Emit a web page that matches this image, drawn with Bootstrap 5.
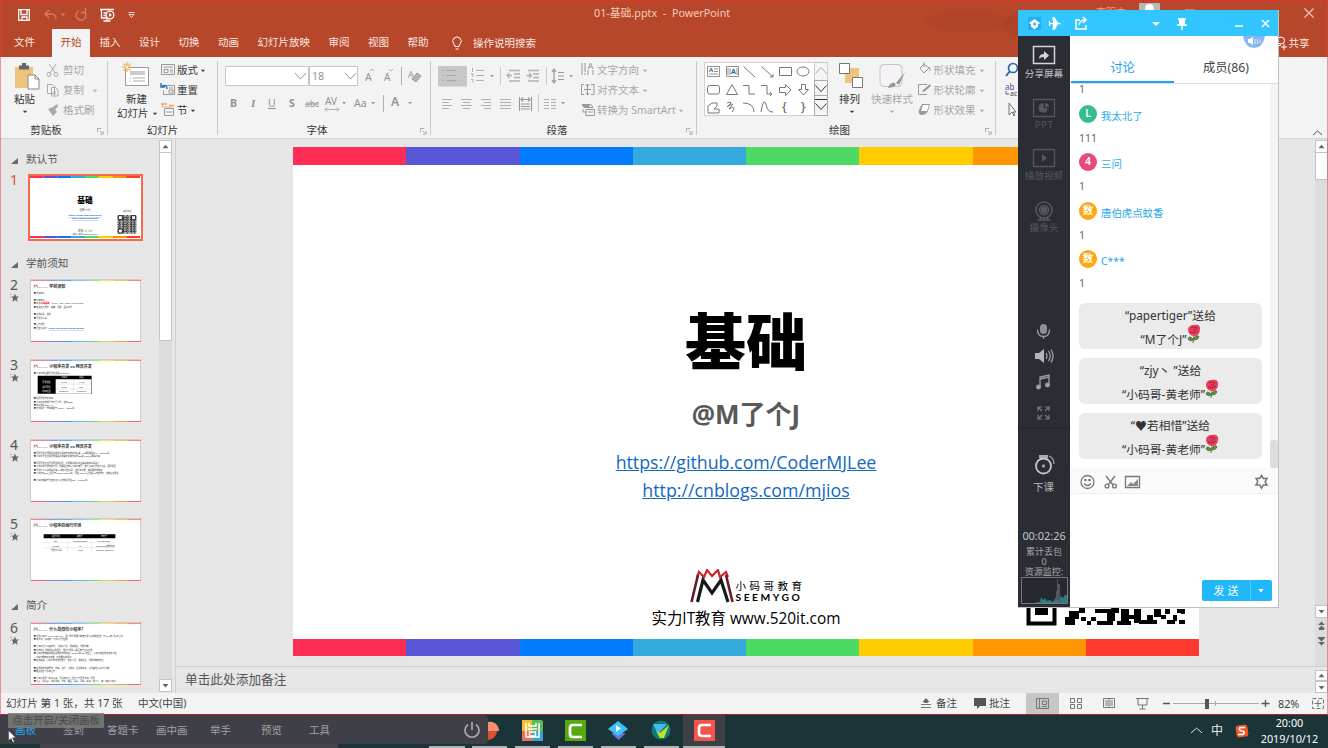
<!DOCTYPE html>
<html lang="zh-CN">
<head>
<meta charset="utf-8">
<title>01-基础.pptx - PowerPoint</title>
<link href="https://cdn.jsdelivr.net/npm/bootstrap@5.3.0/dist/css/bootstrap.min.css" rel="stylesheet">
<script src="https://cdn.jsdelivr.net/npm/bootstrap@5.3.0/dist/js/bootstrap.bundle.min.js"></script>
<style>
html,body{width:1328px;height:748px;overflow:hidden}
body{font-family:"Noto Sans","Noto Sans CJK SC",sans-serif;font-size:10.5px;line-height:14px;color:#333;background:#e6e6e6;white-space:nowrap}
svg{display:block;flex:none;overflow:visible}
.screen{width:1328px;height:748px}
.edge{inset:0 0 33px 0;border:1px solid #e8374280;border-top:1.5px solid #e0352b;border-bottom:1px solid #b02030;pointer-events:none;z-index:5}
.head{height:57px;background:#b7472a;color:#fbe9e2}
.titlerow{height:29px}
.tabsrow{height:28px;padding-left:5px}
.tabsrow .tb{padding:0 9px;width:auto;line-height:27px;height:28px;margin-right:.5px}
.tabsrow .tb.on{background:#f3f3f3;color:#b7472a;padding:0 8.5px}
.ribbon{height:82px;background:#f3f3f3;border-bottom:1px solid #d2d2d2;padding-top:4px}
.grp{height:74px;border-right:1px solid #c9c9c9}
.grp .body{height:62.5px;margin-top:-1px}
.grp .lab{height:14px;line-height:14px;color:#333;text-align:center}
.lab svg{right:3px;top:5px}
.rows>div{height:20px;line-height:20px}
.dim{color:#a6a6a6}
.blk{color:#3a3a3a}
.pane{width:176px;border-right:1px solid #d0d0d0}
.sec{height:20px;line-height:20px;font-size:10.6px;color:#555;padding-left:11px}
.sec svg{margin-right:8px}
.item .no{width:30px;padding-left:10px;font-size:14px;line-height:14px;color:#555;margin-top:-1px}
.item .no svg{margin-top:1px}
.thumb{width:111px;height:63px;background:#fff;border:.5px solid #ccc}
.thumb.sel{width:115px;height:67px;margin-left:-2px;border:2px solid #f26b4a}
.thumb svg{width:110px;height:62px;overflow:hidden;fill:#333}
.vbar{width:13px;background:#dcdcdc}
.vbtn{height:13px;background:#fff;border:1px solid #c4c4c4}
.slide{width:906px;height:509px;margin:8px 0 0 117px;background:#fff}
.stripe{height:17.5px}
.stripe i{flex:1}
.slide h1{font-size:61px;line-height:70px;font-weight:900;color:#000;margin:0}
.slide .by{font-size:26px;line-height:34px;font-weight:700;color:#595959}
.slide a{font-family:"Open Sans","Noto Sans CJK SC",sans-serif;font-size:17.8px;line-height:28px;color:#1268c0}
.notes{height:27px;border-top:1px solid #cfcfcf;font-size:12.7px;line-height:25px;padding-left:9px;color:#555}
.status{height:21px;background:#f3f3f3;color:#444}
.task{height:33px;background:#1a3438}
.bottools{width:488px;height:29px;background:#3f3f47;border-radius:0 4px 4px 0;color:#a2a2a6;line-height:30px}
.tip{left:8px;top:713px;width:96px;height:15px;background:#7b7b79;color:#4b4b4b;line-height:14px;z-index:7;opacity:.85}
.live{left:1018px;top:10px;width:261px;height:598px;z-index:8;background:#fff;border:1px solid #bcc4c8;border-top:0;border-left:0}
.lbar{height:26px;background:#33c5ff}
.side{width:52px;background:#2a2d33;color:#c8c8c8}
.off{color:#56585d}
.ltabs{height:48px;font-size:12.3px;line-height:63px;border-bottom:1px solid #ddd;color:#444;text-align:center}
.ltabs .on{color:#1da1f2;box-shadow:inset 0 -2px #1da1f2}
.av{width:18px;height:18px;border-radius:50%;color:#fff;font-weight:600;text-align:center;line-height:17px;font-size:10.5px}
.nm{color:#28a9e8;margin-left:4px;padding-top:4px;font-size:10.4px}
.msg{color:#666;height:30.5px;line-height:30px;font-size:10.5px}
.gift{width:183px;height:46px;background:#ebebeb;border-radius:6px;color:#333;font-size:11.8px;line-height:24px;text-align:center;margin-bottom:9px}
.gift .ln{height:24px}
.sendb{background:#21b7fb;color:#fff;width:70px;height:21px;border-radius:2px;line-height:21px;font-size:11px;text-align:center}
</style>
</head>
<body>
<svg width="0" height="0" class="position-absolute">
<defs>
<symbol id="dn" viewBox="0 0 6 4"><path d="M.8.7h4.400L3 3z" fill="currentColor"/></symbol>
<symbol id="launch" viewBox="0 0 8 8"><path d="M.5 5V.5H5M3 3l3 3M7 3.5V7H3.5" fill="none" stroke="#999" stroke-width=".9"/></symbol>
<symbol id="tri" viewBox="0 0 8 7"><path d="M8 0v7H0z" fill="#666"/></symbol>
<symbol id="star" viewBox="0 0 10 10"><path d="M5.5.5 6.8 3.8 10 4 7.600 6.200 8.500 9.700 5.500 7.800 2.600 9.700 3.400 6.200 1.200 4 4.300 3.800z" fill="#666"/><path d="M0 1.500h2M0 5h1" stroke="#888" stroke-width=".7"/></symbol>
<symbol id="mlogo" viewBox="0 0 44 34"><path d="M7 8 9 3 14 8 17 1 22 7 28 1 30 8 36 3 38 8" fill="none" stroke="#c9262d" stroke-width="2.200"/><path d="M1.500 33 8 6M42.500 33 36 6" stroke="#6b1c28" stroke-width="2.600"/><path d="M7.500 33 13 11 22 24 31 11 38 33" fill="none" stroke="#191919" stroke-width="3.200"/></symbol>
<symbol id="bars" viewBox="0 0 328 4" preserveAspectRatio="none"><path fill="#ff2d55" d="M0 0h41v4H0z"/><path fill="#5856d6" d="M41 0h41v4H41z"/><path fill="#007aff" d="M82 0h41v4H82z"/><path fill="#34aadc" d="M123 0h41v4h-41z"/><path fill="#4cd964" d="M164 0h41v4h-41z"/><path fill="#fc0" d="M205 0h41v4h-41z"/><path fill="#ff9500" d="M246 0h41v4h-41z"/><path fill="#ff3b30" d="M287 0h41v4h-41z"/></symbol>
<g id="frame"><use href="#bars" width="330" height="4" opacity=".6"/><use href="#bars" y="182" width="330" height="4" opacity=".6"/><use href="#mlogo" x="7" y="12" width="14" height="12"/><text x="21" y="23" font-size="6" fill="#888">SEEMYGO</text></g>
<symbol id="rose" viewBox="0 0 14 20"><path d="M7 11 6 19M6 15Q2 11 1 15q2 3 5 1M7 14q4-4 5-1-1 3-5 3" fill="#66884a" stroke="#4f7a3b"/><path d="M7 1c4-1 7 1 6 5-.500 4-3 6-6 6S1 9 1 6C1 3 3 1 7 1z" fill="#e8405c"/><path d="M4 4q3-2 6 0-1 3-4 2M3 8q4 2 8-1" fill="none" stroke="#ad1c3c"/></symbol>
<symbol id="up13" viewBox="0 0 11 11"><path d="M2.500 7.200h6L5.500 3.800z" fill="#666"/></symbol>
<symbol id="dn13" viewBox="0 0 11 11"><path d="M2.500 4h6L5.500 7.400z" fill="#666"/></symbol>
</defs>
</svg>

<div class="screen d-flex flex-column position-relative">
<div class="edge position-absolute"></div>

<header class="head">
  <div class="titlerow d-flex">
    <svg width="594" height="29" fill="none" stroke="#fff" stroke-width="1.300">
      <path d="M18.700 9.700h10.600v10.600H18.700z"/><path d="M21 10v4.500h6V10M22 20v-3h5v3"/>
      <g stroke="#d57d65"><path d="M49 10l-4 4 4 4M45 14h6q5 0 5 5" /><path d="M60.500 13.500h5l-2.500 2.500z" fill="#d57d65" stroke="none"/><path d="M84.500 11.500A5 5 0 1 1 79 10.500M85.500 8v4.500H81"/></g>
      <path d="M100 9.500h14M101.500 10v8h6M107 18v3M103.500 21h7"/><circle cx="110" cy="15" r="3.800"/><path d="M109 13l3 2-3 2z" fill="#fff" stroke="none"/><path d="M103.500 13h3M103.500 15.500h2"/>
      <path d="M128.500 12.500h6M129 14.500h5l-2.500 3z" stroke-width="1" stroke="#f6d5ca"/>
    </svg>
    <span style="font-size:10.800px;line-height:26px;color:#f7cbbb">01-基础.pptx&nbsp; - &nbsp;PowerPoint</span>
    <svg class="ms-auto" width="300" height="29"><ellipse cx="-60" cy="21" rx="43" ry="11" fill="#a33f26" opacity=".25"/><ellipse cx="5" cy="25" rx="30" ry="14" fill="#963923" opacity=".28"/><path d="M111 3h21v7h-21z" fill="#b8b8b8"/><circle cx="121.500" cy="8.500" r="4.500" fill="#fff"/><text x="68" y="16" font-size="10" fill="#e0a08c">李明杰</text><path d="M157 10h9M276.500 8.500l9 9m0-9-9 9" stroke="#f5c5b7" stroke-width="1.200" fill="none"/></svg>
  </div>
  <nav class="tabsrow d-flex">
    <span class="tb" style="margin-right:8px">文件</span><span class="tb on">开始</span><span class="tb">插入</span><span class="tb">设计</span><span class="tb">切换</span><span class="tb">动画</span><span class="tb">幻灯片放映</span><span class="tb">审阅</span><span class="tb">视图</span><span class="tb">帮助</span>
    <svg width="12" height="15" class="ms-2" style="margin-top:7px;margin-left:13px!important" fill="none" stroke="#fff"><path d="M4 10.500Q4 9 2.500 7.500A4.200 4.200 0 1 1 9.500 7.500Q8 9 8 10.500zM4.500 13h3"/></svg>
    <span style="line-height:28px;margin-left:10px">操作说明搜索</span>
    <span class="ms-auto d-flex" style="line-height:29px;padding-right:18.500px"><svg width="15" height="16" style="margin-top:7px" fill="none" stroke="#fff"><circle cx="7" cy="4.500" r="3.500"/><path d="M2 13Q3 9 7 9M10 8v6M7 11h6"/></svg>共享</span>
  </nav>
</header>

<section class="ribbon d-flex">
  <div class="grp" style="width:108px">
    <div class="body d-flex">
      <div style="width:46px;padding-left:14px"><svg width="26" height="29" style="margin-top:3px"><path d="M1 4h18v21H1z" fill="#ecc47c"/><path d="M5 2.500h10v4H5z" fill="#666"/><path d="M8 0h4v3H8z" fill="#666"/><path d="M14 12h7l4 4v10H14z" fill="#fff" stroke="#888"/><path d="M21 12v4h4" fill="none" stroke="#888"/></svg>粘贴<svg class="ms-2 mt-1" width="6" height="4"><use href="#dn"/></svg></div>
      <div class="rows dim d-flex flex-column">
        <div class="d-flex"><svg width="17" height="20" fill="none" stroke="#aaa"><path d="M3 4l6.500 9M10 4 4 13"/><circle cx="3" cy="14.500" r="2"/><circle cx="10" cy="14.500" r="2"/></svg>剪切</div>
        <div class="d-flex"><svg width="17" height="20" fill="#f3f3f3" stroke="#aaa"><path d="M1.500 4.500h5l2 2v7h-7zM5.500 7.500h4l2.500 2.500v6H5.500zM7 12h3M7 14h3"/></svg>复制<svg width="6" height="4" style="margin:9px 0 0 8px"><use href="#dn"/></svg></div>
        <div class="d-flex"><svg width="17" height="20"><path d="M2 9l5-2 4 5-4 4zM7 7l4-3 1 2-3 4z" fill="#aaa"/></svg>格式刷</div>
      </div>
    </div>
    <div class="lab position-relative" style="padding-right:15px">剪贴板<svg class="position-absolute" width="7" height="7"><use href="#launch"/></svg></div>
  </div>
  <div class="grp" style="width:110px">
    <div class="body d-flex">
      <div style="width:52px;padding-left:9px"><div style="padding-left:5px"><svg width="28" height="29" style="margin-top:3px"><path d="M3.500 4.500h23v18h-23z" fill="#fff" stroke="#999"/><path d="M8 15h1M11 15h12M8 18h1M11 18h12" stroke="#aaa"/><path d="M8 8h15v4H8z" fill="#ccc"/><g stroke="#eeb355" stroke-width="1.200"><path d="M5-1v3M5 6v3M0 4h3M7 4h3M1.500.5l2 2M6.500 5.500l2 2M8.500.5l-2 2M3.500 5.500l-2 2"/></g><circle cx="5" cy="4" r="2" fill="#fff4d5" stroke="#eeb355" stroke-width=".8"/></svg></div><span style="margin-left:9px">新建</span><div class="d-flex">幻灯片<svg width="6" height="4" style="margin:6px 0 0 3px"><use href="#dn"/></svg></div></div>
      <div class="rows blk d-flex flex-column">
        <div class="d-flex"><svg width="17" height="20" fill="none" stroke="#999"><path d="M1.500 4.500h13v10h-13zM3.500 7h9M4 9.500h4v3H4zM10 10h3M10 12h3"/></svg>版式<svg width="6" height="4" style="margin:9px 0 0 2px"><use href="#dn"/></svg></div>
        <div class="d-flex"><svg width="17" height="20" fill="none" stroke="#999"><path d="M5.500 5.500h9v9h-11v-4M9 8h4M9 10h4v3H9z"/><path d="M7 9Q7 4 2 6M1 3v4h4" stroke="#2b6cb5" stroke-width="1.400"/></svg>重置</div>
        <div class="d-flex"><svg width="17" height="20" fill="none" stroke="#999"><path d="M4.500 8.500h9v7h-9zM6 12h6"/><path d="M1 4h6M9 5.500h5" stroke="#eca66a" stroke-width="1.500"/><path d="M2.500 4v3h10" stroke="#eca66a"/></svg>节<svg width="6" height="4" style="margin:9px 0 0 2px"><use href="#dn"/></svg></div>
      </div>
    </div>
    <div class="lab">幻灯片</div>
  </div>
  <div class="grp" style="width:213px">
    <svg class="body" width="212" height="60" fill="none" stroke="#9a9a9a" font-size="10.500">
      <path d="M7.500 6.500h83v19h-83zM91.500 6.500h48v19h-48z" fill="#fff" stroke="#c6c6c6"/><path d="M77 13l5.500 6 5.500-6M127 13l5.500 6 5.500-6" stroke="#888" stroke-width=".9"/>
      <g fill="#929292" stroke="none"><text x="94" y="20">18</text><text x="147" y="21">A</text><text x="166" y="21" font-size="10">A</text><text x="190" y="18" font-size="9">A</text><text x="12" y="47" font-weight="700">B</text><text x="33" y="47" font-style="italic" font-weight="700" font-size="11" font-family="Liberation Serif">I</text><text x="50" y="47" text-decoration="underline">U</text><text x="71" y="47" font-weight="700">S</text><text x="87" y="47" font-size="8.500" text-decoration="line-through">abc</text><text x="107" y="45" font-size="10">AV</text><text x="136" y="47">Aa</text><text x="173" y="46" font-weight="600" font-size="12">A</text><path d="M124 42h4.200l-2.100 2.300zM153 42h4.200l-2.100 2.300zM190 42h4.200l-2.100 2.300z" fill="#999"/></g>
      <path d="M152 11l2-2 2 2M171 9l2 2 2-2M183.500 7v18M165.500 35v17M107 49.500h14M109 47.500l-2 2 2 2M119 47.500l2 2-2 2" stroke="#b0b0b0"/><path d="M194 19l5-6 4 3-5 6z" fill="#b5b5b5"/>
    </svg>
    <div class="lab position-relative" style="padding-right:14px">字体<svg class="position-absolute" width="7" height="7"><use href="#launch"/></svg></div>
  </div>
  <div class="grp" style="width:266px">
    <div class="body d-flex">
    <svg width="149" height="60" fill="none" stroke="#b0b0b0">
      <path d="M7 6h29v20.500H7z" fill="#c7c7c7" stroke="none"/><path d="M11 10.500h1.500M15 10.500h10M11 15.500h1.500M15 15.500h10M11 20.500h1.500M15 20.500h10" stroke="#aaa"/>
      <path d="M45 10.500h8M45 15.500h8M45 20.500h8M41.500 8v4M40 14h2v3M40 19.500h2v3"/>
      <path d="M69.500 7v18M115.500 7v18M107.500 34v18" stroke="#ccc"/>
      <path d="M78 10.500h11M83 14h6M83 17.500h6M78 21h11M81 15.500h-5m2.500-2.500L76 15.500 78.500 18M97 10.500h11M102 14h6M102 17.500h6M97 21h11M95.500 15.500h5m-2.500-2.500 2.500 2.500L98 18" stroke-width="1.300"/>
      <path d="M123 10v12M121 12l2-3 2 3M121 20l2 3 2-3M127 12.500h6M127 16h6M127 19.500h6" stroke="#999" stroke-width="1.200"/>
      <path d="M11 39.500h10M11 42.500h7M11 45.500h10M11 48.500h7M30 39.500h11M32 42.500h7M30 45.500h11M32 48.500h7M50 39.500h10M53 42.500h7M50 45.500h10M53 48.500h7M69 39.500h11M69 42.500h11M69 45.500h11M69 48.500h11"/>
      <path d="M88.500 37v14M100.500 37v14M90 39.500h9M92 37.500l-2 2 2 2M97 37.500l2 2-2 2M90 44h9M90 46.500h9M90 49h9" stroke="#999" stroke-width="1.100"/>
      <path d="M113 39.500h5M113 42.500h5M113 45.500h5M113 48.500h5M120 39.500h5M120 42.500h5M120 45.500h5M120 48.500h5"/>
      <path d="M59 15h4.200l-2.100 2.300zM138 15h4.200l-2.100 2.300zM130 42h4.200l-2.100 2.300z" fill="#999" stroke="none"/>
    </svg>
    <div class="rows dim">
      <div class="d-flex"><svg width="17" height="20" fill="none" stroke="#999"><path d="M2 3v12M5 3v9M8 10v5M13 10v5M5 13v2"/><path d="M8 9l2.500-6L13 9M9 7h3"/></svg>文字方向<svg width="6" height="4" style="margin:9px 0 0 3px"><use href="#dn"/></svg></div>
      <div class="d-flex"><svg width="17" height="20" fill="none" stroke="#999"><path d="M4 4.500H1.500v10H4M11 4.500h3v10h-3M7.500 4v11M5.500 6l2-2 2 2M5.500 13l2 2 2-2M4 9.500h7"/></svg>对齐文本<svg width="6" height="4" style="margin:9px 0 0 3px"><use href="#dn"/></svg></div>
      <div class="d-flex"><svg width="17" height="20" fill="none" stroke="#999"><path d="M2 4.500h9l2 3H4zM6 9.500h8.500v6H6z"/><path d="M2 5h7v2H4z" fill="#999"/><path d="M3 9v3h3M8 12h5"/></svg><span>转换为 SmartArt</span><svg width="6" height="4" style="margin:9px 0 0 2px"><use href="#dn"/></svg></div>
    </div>
    </div>
    <div class="lab position-relative" style="padding-right:13px">段落<svg class="position-absolute" width="7" height="7"><use href="#launch"/></svg></div>
  </div>
  <div class="grp" style="width:299px">
    <div class="body d-flex">
      <svg width="132" height="60" fill="none" stroke="#777">
        <path d="M7.500 2.500h123v53h-123z" fill="#fff" stroke="#d5cccc"/><path d="M117.500 2.500h13v53h-13z" fill="#f5f5f5" stroke="#ccc"/><path d="M117.500 20.500h13v15h-13zM117.500 35.500h13v20h-13z" stroke="#aaa"/>
        <path d="M118.500 13.500l5.500-6 5.500 6" stroke="#aaa"/><path d="M118.500 25.500l5.500 6 5.500-6M118.500 43.500l5.500 6 5.500-6" stroke="#333"/><path d="M118 39.500h12" stroke="#333"/>
        <path d="M10.500 6.500h12v10h-12zM29.500 6.500h12v10h-12zM17 9h4M17 11.500h4M12 14h9M31 8v7M33 8v7M40 8v7" stroke-width=".8"/><text x="12" y="12" font-size="6" font-weight="700" fill="#369" stroke="none">A</text><text x="34" y="14" font-size="7" font-weight="700" fill="#369" stroke="none">A</text>
        <path d="M46.500 6.500 58 17M64.500 6.500 76 17m0-3v3h-3M82.500 7.500h12v8h-12z"/><ellipse cx="106" cy="11.500" rx="6" ry="4.500"/>
        <rect x="10.500" y="25.500" width="12" height="8.500" rx="2"/><path d="M35 24.500 29.500 34.500h11zM46 25.500h6v8.500h6M64 25.500h6v8.500h5m-2-2 2 2-2 2M82.500 27.500h6v-3l5.500 5.500-5.500 5.500v-3h-6zM104.500 24.500h4v5h3L106.500 35l-5-5.500h3z"/>
        <path d="M11 46l4-3h5v3l-3 3h5v4H11zM30 43q4-2 4 0l-4 4q7-5 5-2l-3 4q5-3 5 0l-2 3M46 43q11 0 11 9M64 52q3-18 6-4 2 5 6 4"/><g fill="#555" stroke="none" font-size="12"><text x="85" y="51">{</text><text x="104" y="51">}</text></g>
      </svg>
      <div style="width:36px;padding-left:10px"><svg width="26" height="29" style="margin-top:3px"><path d="M6 5h14v15H6z" fill="#ecc47c"/><path d="M.5.5h10v10h-10zM13.500 14.500h10v10h-10z" fill="#fff" stroke="#777"/></svg>排列<svg width="6" height="4" class="mt-1" style="margin-left:10px"><use href="#dn"/></svg></div>
      <div class="dim" style="width:53px;padding-left:6px"><svg width="40" height="29" style="margin-top:3px"><rect x="9" y="1.500" width="22" height="22" rx="4" fill="#f7f2f7" stroke="#c9bfcb"/><path d="M34 9 25 20l3 2z" fill="#999"/><path d="M17 25q2-6 7-5 3 4-7 5z" fill="#999"/></svg>快速样式<svg width="6" height="4" class="mt-1" style="margin-left:18px"><use href="#dn"/></svg></div>
      <div class="rows dim">
        <div class="d-flex"><svg width="15.500" height="20" fill="none" stroke="#999"><path d="M2 8l4-4 5 4-5 5zM11 7q3 3 0 4M6 2v5"/></svg>形状填充<svg width="6" height="4" style="margin:9px 0 0 3px"><use href="#dn"/></svg></div>
        <div class="d-flex"><svg width="15.500" height="20" fill="none" stroke="#999"><path d="M9 4.500H.5v10H9" /><path d="M4 11l8-7 1 2-7 6z" fill="#999" stroke="none"/></svg>形状轮廓<svg width="6" height="4" style="margin:9px 0 0 3px"><use href="#dn"/></svg></div>
        <div class="d-flex"><svg width="15.500" height="20"><path d="M1 10l3-6h8l-2 7q-2 4-7 4-3-1-2-5z" fill="#999"/><path d="M5 5h6l-2 6H3z" fill="#fff"/></svg>形状效果<svg width="6" height="4" style="margin:9px 0 0 3px"><use href="#dn"/></svg></div>
      </div>
    </div>
    <div class="lab position-relative" style="padding-right:13px">绘图<svg class="position-absolute" width="7" height="7"><use href="#launch"/></svg></div>
  </div>
  <svg width="332" height="76" fill="none"><circle cx="17" cy="7" r="4.500" stroke="#2f68a8" stroke-width="1.700"/><path d="M14 10l-4 5" stroke="#2f68a8" stroke-width="2"/><text x="9" y="29" font-size="8" fill="#6b4c9a">ab</text><text x="14" y="35" font-size="7" fill="#444">ac</text><path d="M10 30v3h3" stroke="#2f68a8"/><path d="M13 42v12l3-3 2 4 1-1-2-3h3z" stroke="#777"/><path d="M317 74l4.500-4 4.500 4" stroke="#555"/></svg>
</section>

<main class="d-flex" style="height:554px">
  <aside class="pane d-flex">
    <div class="flex-grow-1 overflow-hidden">
      <div class="sec d-flex align-items-center" style="margin-top:9.500px"><svg width="7" height="6" class="mt-1"><use href="#tri"/></svg>默认节</div>
      <div class="item d-flex" style="margin-top:5.500px;height:79px"><div class="no" style="color:#d8503a">1</div><div class="thumb sel"><svg viewBox="0 0 330 186"><use href="#bars" width="330" height="6"/><use href="#bars" y="180" width="330" height="6"/><g text-anchor="middle"><text x="165" y="82" font-size="23" font-weight="900" fill="#000">基础</text><text x="165" y="105" font-size="8">@M了个J</text><g fill="#0563c1" font-weight="700" text-decoration="underline"><text x="165" y="120" font-size="6.300">https://github.com/CoderMJLee</text><text x="165" y="129" font-size="6.300">http://cnblogs.com/mjios</text></g><text x="165" y="177" font-size="6">实力IT教育 www.520it.com</text><text x="291" y="108" font-size="6.500">扫码关注</text></g><use href="#mlogo" x="144" y="157" width="15" height="13"/><text x="160" y="169" font-size="5.500" fill="#777">小码哥教育</text><path d="M263 117h56v56h-56z" fill="#aaa"/><path d="M263 124h56M263 131h56M263 138h56M263 145h56M263 152h56M263 159h56M263 166h56" stroke="#333" stroke-width="3.500" stroke-dasharray="5 3 2 4 7 2"/><path d="M269 117v56M280 117v56M292 117v56M304 117v56M314 117v56" stroke="#333" stroke-width="3" stroke-dasharray="4 3 6 2"/><g fill="#fff" stroke="#222" stroke-width="3"><path d="M265 119h12v12h-12zM305 119h12v12h-12zM265 159h12v12h-12z"/></g></svg></div></div>
      <div class="sec d-flex align-items-center"><svg width="7" height="6" class="mt-1"><use href="#tri"/></svg>学前须知</div>
      <div class="item d-flex" style="margin-top:6px;height:80px"><div class="no">2<svg width="9" height="9"><use href="#star"/></svg></div><div class="thumb"><svg viewBox="0 0 330 186" font-size="6.300"><use href="#frame"/><text x="55" y="23" font-size="12" font-weight="700">学前须知</text><text x="8" y="42">■ 课程简介</text><text x="8" y="62">■ 必备知识</text><text x="8" y="73">■ 熟悉 <tspan fill="#f02" font-weight="700">前端基础</tspan>（HTML、CSS）https://github.com</text><text x="8" y="83">■ 包括但不限于：变量、函数、面向对象</text><text x="8" y="105">■ 使用工具、插件</text><text x="8" y="116">■ 开发者工具</text><text x="8" y="136">■ 官方文档</text><text x="8" y="147">■ 微信小程序：<tspan fill="#0563c1" font-weight="700" text-decoration="underline">https://developers.weixin.qq.com</tspan></text></svg></div></div>
      <div class="item d-flex" style="height:79.500px"><div class="no">3<svg width="9" height="9"><use href="#star"/></svg></div><div class="thumb"><svg viewBox="0 0 330 186" font-size="6.300"><use href="#frame"/><text x="55" y="23" font-size="12" font-weight="700">小程序开发 vs 网页开发</text><text x="8" y="41">■ 小程序的主要开发语言是JavaScript</text><path d="M20 47h162v54H20z" fill="#000"/><path d="M74 58h107v43H74z" fill="#fff"/><path d="M74 72h107M74 87h107M127 58v43" stroke="#bbb"/><g fill="#fff"><text x="34" y="69">开发语言</text><text x="34" y="83">运行环境</text><text x="34" y="97">线程模型</text><text x="90" y="55">小程序</text><text x="145" y="55">网页</text></g><g><text x="90" y="69">WXML</text><text x="144" y="69">HTML</text><text x="90" y="83">WXSS</text><text x="145" y="83">CSS</text><text x="83" y="97">JavaScript</text><text x="137" y="97">JavaScript</text></g><text x="8" y="117">■ 网页开发渲染线程</text><text x="8" y="128">■ 小程序中逻辑层渲染层分开，没有DOM</text><text x="8" y="138">■ 缺少相关DOM API</text><text x="8" y="148">■ 无法运行一些前端框架 jQuery、Zepto等</text></svg></div></div>
      <div class="item d-flex" style="height:79.500px"><div class="no">4<svg width="9" height="9"><use href="#star"/></svg></div><div class="thumb"><svg viewBox="0 0 330 186" font-size="6.300"><use href="#frame"/><text x="55" y="23" font-size="12" font-weight="700">小程序开发 vs 网页开发</text><text x="8" y="41">■ 网页开发者需要面对的环境是各式各样的浏览器，PC端需要面对IE、Chrome等</text><text x="8" y="51">■ 小程序开发过程中需要面对的是两大操作系统iOS和Android的客户端</text><text x="8" y="72">■ 网页开发者在开发网页的时候，只需要使用到浏览器和编辑工具即可</text><text x="8" y="82">■ 小程序的开发有所不同，需要经过申请小程序帐号、安装小程序开发者工具、配置项目</text><text x="8" y="92">■ 开发者可以使用客户端API调起微信扫码、支付等功能，实现更丰富体验</text><text x="8" y="102">■ 小程序在iOS上运行于JavaScriptCore中，而在Android上则由X5内核渲染，性能接近原生</text><text x="8" y="124">■ 小程序借助于微信平台可以轻松运行在iOS、Android等</text></svg></div></div>
      <div class="item d-flex" style="height:76.500px"><div class="no">5<svg width="9" height="9"><use href="#star"/></svg></div><div class="thumb"><svg viewBox="0 0 330 186" font-size="6.300"><use href="#frame"/><text x="55" y="23" font-size="12" font-weight="700">小程序的运行环境</text><path d="M38 46h215v12H38z" fill="#000"/><g fill="#fff"><text x="62" y="54">运行环境</text><text x="137" y="54">逻辑层</text><text x="210" y="54">渲染层</text></g><path d="M38 71h215M38 86h215M110 58v42M181 58v42" stroke="#ccc"/><text x="69" y="68">iOS</text><text x="127" y="68">JavaScriptCore</text><text x="200" y="68">WKWebView</text><text x="62" y="83">Android</text><text x="143" y="83">V8</text><text x="195" y="83">chromium定制内核</text><text x="60" y="97">开发者工具</text><text x="140" y="97">NWJS</text><text x="195" y="97">Chrome WebView</text></svg></div></div>
      <div class="sec d-flex align-items-center"><svg width="7" height="6" class="mt-1"><use href="#tri"/></svg>简介</div>
      <div class="item d-flex" style="margin-top:7px;height:70px"><div class="no">6<svg width="9" height="9"><use href="#star"/></svg></div><div class="thumb"><svg viewBox="0 0 330 186" font-size="6.300"><use href="#frame"/><text x="55" y="23" font-size="12" font-weight="700">什么是微信小程序？</text><text x="8" y="41">■ 微信小程序（Mini Program），是一种不需要下载安装即可使用的应用，于2017年1月9日上线</text><text x="8" y="51">■ 用户扫一扫或搜一下即可打开应用</text><text x="8" y="72">■ 小程序也可以被称为，可触手可及、用完即走、无需卸载</text><text x="8" y="83">■ 也体现了“用完即走”的理念，用户不用关心是否安装太多应用</text><text x="8" y="93">■ 小程序能够实现原生应用的流畅体验 Android 和 iOS 平台上，小程序的应用将无处不在</text><text x="8" y="105">✓ 小程序能够快速传播，提供更好的服务</text><text x="8" y="115">■ 总体来讲，小程序有着无需安装、触手可及、用完即走、无需卸载的特点</text><text x="8" y="137">■ 应用场景包括餐饮、电商、出行、小游戏、生活服务等，以及其他众多线下场景</text><text x="8" y="147">■ 更多信息可参考官方</text><text x="8" y="168">■ 小程序发展一年多以来，已经有超过一百五十万开发者加入开发</text><text x="8" y="178">■ 代表：拼多多、摩拜单车、京东、美团、滴滴、同程、携程、饿了么、跳一跳等小程序</text></svg></div></div>
    </div>
    <div class="vbar d-flex flex-column" style="margin:1px 3px 1px 0"><div class="vbtn"><svg width="11" height="11"><use href="#up13"/></svg></div><div class="vbtn" style="height:188px;border-top:0"></div><div class="vbtn mt-auto"><svg width="11" height="11"><use href="#dn13"/></svg></div></div>
  </aside>
  <section class="flex-grow-1 d-flex flex-column">
    <div class="d-flex" style="height:527px">
      <div class="slide d-flex flex-column">
        <div class="stripe d-flex"><i style="background:#ff2d55"></i><i style="background:#5856d6"></i><i style="background:#007aff"></i><i style="background:#34aadc"></i><i style="background:#4cd964"></i><i style="background:#fc0"></i><i style="background:#ff9500"></i><i style="background:#ff3b30"></i></div>
        <div class="flex-grow-1 position-relative text-center d-flex flex-column align-items-center" style="padding-top:142px">
          <h1>基础</h1>
          <div class="by" style="margin-top:20px">@M了个J</div>
          <a href="#" style="margin-top:17px">https://github.com/CoderMJLee</a>
          <a href="#">http://cnblogs.com/mjios</a>
          <div class="d-flex" style="margin-top:65px;width:113px;height:36px"><svg width="44" height="34"><use href="#mlogo"/></svg><div class="text-start text-black" style="padding:12px 0 0 2px;line-height:11.500px;font-size:10.500px;letter-spacing:3.500px">小码哥教育<div style="font-size:10.300px;font-weight:700;font-family:Lato;letter-spacing:2.500px">SEEMYGO</div></div></div>
          <div class="text-black" style="font-size:15.400px;line-height:24px;margin-top:2px;font-family:'Open Sans','Noto Sans CJK SC',sans-serif">实力IT教育 www.520it.com</div>
          <svg class="position-absolute" style="left:734px;top:432px" width="158" height="30"><path d="M1.500-1v27.500h26V-1M10-1h9v17h-9z" fill="none" stroke="#000" stroke-width="4"/><path d="M10 0h10v16H10z"/><path d="M38 20h10v8H38zM42 14h10v8H42zM52 11h6v5h-6zM54 20h5v4h-5zM60 24h4v4h-4zM64 20h5v4h-5zM68 12h16v4H68zM70 24h16v4H70zM80 16h8v8h-8zM84 11h8v5h-8zM90 24h14v4H90zM94 12h8v12h-8zM102 18h6v4h-6zM107 12h7v14h-7zM112 23h18v4h-18zM120 18h6v5h-6zM127 12h7v8h-7zM134 18h5v4h-5zM140 23h8v4h-8zM138 12h5v5h-5zM146 18h4v6h-4zM150 12h4v4h-4zM154 12h4v5h-4zM152 23h6v4h-6z"/></svg>
        </div>
        <div class="stripe d-flex"><i style="background:#ff2d55"></i><i style="background:#5856d6"></i><i style="background:#007aff"></i><i style="background:#34aadc"></i><i style="background:#4cd964"></i><i style="background:#fc0"></i><i style="background:#ff9500"></i><i style="background:#ff3b30"></i></div>
      </div>
      <div class="vbar ms-auto d-flex flex-column" style="margin-top:1px"><div class="vbtn"><svg width="11" height="11"><use href="#up13"/></svg></div><div class="vbtn" style="height:27px;border-top:0"></div><div class="vbtn" style="margin-top:425px"><svg width="11" height="11"><use href="#dn13"/></svg></div><svg width="13" height="36" fill="#666"><path d="M3 7h7L6.500 3.500zM3 11h7L6.500 7.500zM4 11h5v1H4zM3 19h7v1H3zM3 20h7L6.500 23.500zM3 24h7L6.500 27.500z"/></svg></div>
    </div>
    <div class="notes d-flex">单击此处添加备注<div class="ms-auto" style="width:13px;padding-top:3px"><div class="vbtn" style="height:11px"><svg width="11" height="9" viewBox="0 1 11 9"><use href="#up13" width="11" height="11"/></svg></div><div class="vbtn" style="height:12px"><svg width="11" height="10"><use href="#dn13" width="11" height="11"/></svg></div></div></div>
  </section>
</main>

<footer class="status d-flex" style="line-height:21px">
  <span style="padding-left:6px;width:138px;font-size:10.600px">幻灯片 第 1 张，共 17 张</span><span>中文(中国)</span>
  <span class="ms-auto d-flex"><svg width="15" height="21"><path d="M5 5l3.500 4h-7z" fill="#666"/><path d="M0 11.500h10M0 14.500h10M3 9.500h4" stroke="#777"/></svg>备注</span>
  <span class="d-flex" style="margin-left:17px"><svg width="15" height="21"><path d="M0 5h12v8H6l-3 3v-3H0z" fill="#555"/></svg>批注</span>
  <svg width="318" height="21" fill="none" stroke="#777"><path d="M16 0h33v21H16z" fill="#c6c6c6" stroke="none"/><path d="M26.500 5.500h12v10h-12zM29.500 5.500v10M32.500 8h4v3.500h-4zM32 13.500h5M60.500 5.500h4v4h-4zM67.500 5.500h4v4h-4zM60.500 11.500h4v4h-4zM67.500 11.500h4v4h-4zM99 6v9M93.500 5.500h11v9h-11zM95 8h3M95 10h3M95 12h3M100 8h3M100 10h3M100 12h3M126 5.500h13M128 6v6h9V6M132.500 12v4M129.500 16h6"/><path d="M153 10.500h7M251.500 10.500h8M255.500 7v7" stroke="#555" stroke-width="1.300"/><path d="M163 10.500h86M205.500 8v5" stroke="#aaa"/><path d="M195 6h4v10h-4z" fill="#555" stroke="none"/><text x="268" y="14.500" font-size="10.800" fill="#444" stroke="none">82%</text><path d="M302.500 5.500h11v10h-11z" stroke-dasharray="4 2"/><path d="M308 7v7M304.500 10.500h7"/></svg>
</footer>

<footer class="task d-flex position-relative" style="margin-top:1px">
  <div style="width:488px"><div class="bottools d-flex position-relative"><span style="width:48px;margin-left:15px;color:#22a8ed">画板</span><span style="width:44px">签到</span><span style="width:49px">答题卡</span><span style="width:54px">画中画</span><span style="width:51px">举手</span><span style="width:48px">预览</span><span>工具</span><svg class="ms-auto" style="margin:6px 7px 0 0" width="18" height="18" fill="none" stroke="#a8a8ad" stroke-width="1.700"><path d="M5 3.500a7 7 0 1 0 8 0M9 1v8"/></svg></div><div style="height:4px;width:298px;margin-left:40px;background:#454347"></div></div>
  <svg width="340" height="33">
    <path d="M0 7a9 9 0 0 1 0 18z" fill="#d95232"/><path d="M0 7a9 9 0 0 1 11 9H0z" fill="#f58f6e"/>
    <g transform="translate(34 5)"><rect width="21" height="21" rx="2" fill="#58bb58"/><path d="M0 0h10v11H0z" fill="#f4c034"/><path d="M0 11h10v10H0z" fill="#ea705d"/><path d="M11 11h10v10H11z" fill="#3f9fd8"/><path d="M4 3v14h13V3M7 3v3h7V3M6 9h9M7.500 12h6v4h-6z" fill="none" stroke="#fff" stroke-width="1.500"/></g>
    <g transform="translate(77 5)"><rect width="21" height="21" fill="#58a910"/><path d="M17 5H8Q5 5 5 8v6q0 3 3 3h9" fill="none" stroke="#fff" stroke-width="2.700"/></g>
    <g transform="translate(120 5)"><path d="M4 13h13v1l-6.500 6L4 14z" fill="#6d72dd"/><path d="M0 9 10 1l10 8-10 7z" fill="#3ac4fa"/><path d="M8 5v7l5-3.500z" fill="#fff"/></g>
    <g transform="translate(163 5)"><circle cx="10" cy="10" r="9.500" fill="#137a72"/><path d="M2 4h14L7 14z" fill="#4cb9ee"/><path d="M5 11l4 2 9-8-5 13H9z" fill="#b9e625"/></g>
    <path d="M195 0h42v33h-42z" fill="#3a4043"/><rect x="206" y="5" width="21" height="21" fill="#f5544b"/><path d="M223 10h-9q-3 0-3 3v5q0 3 3 3h9" fill="none" stroke="#fff" stroke-width="2.700"/>
    <path d="M-59 31h36v2h-36zM-16 31h35v2h-35zM27 31h35v2H27zM70 31h35v2H70zM113 31h35v2h-35zM156 31h35v2h-35zM195 31h42v2h-42z" fill="#adb4b5"/>
  </svg>
  <svg class="ms-auto" width="70" height="33" fill="none" stroke="#dfe5e5"><path d="M8 18l5.500-5 5.500 5"/><text x="28" y="20" font-size="12" fill="#e8eeee" stroke="none">中</text><rect x="53" y="10" width="12" height="12" rx="3" fill="#ef5728" stroke="none" transform="rotate(-8 59 16)"/><path d="M62 12.500h-5q-2 3 2 3.500 4 .500 1 3.500h-5" stroke="#fff" stroke-width="1.700"/></svg>
  <div class="text-center text-white" style="width:73px;font-size:10.800px;line-height:16px;padding-right:0">20:00<br>2019/10/12</div>
  <div style="width:1px;margin-right:1px"></div>
</footer>

<div class="tip position-absolute ps-1">点击开启/关闭画板</div>
<svg class="position-absolute" style="left:8px;top:730px;z-index:9" width="9" height="13"><path d="M.5.5v10l2.500-2 2 4 1.500-.700-2-4H8z" fill="#fff" stroke="#333" stroke-width=".5"/></svg>
<div class="position-absolute bg-danger" style="left:0;top:0;width:15px;height:1px"></div>

<section class="live position-absolute d-flex flex-column">
  <div class="lbar"><svg width="260" height="26" fill="none" stroke="#fff" stroke-width="1.500"><path d="M10 7h13v13H10z" fill="#25aeee" stroke="none"/><path d="M11 13l5.500-4 5.500 4-2 1.500v2l-3.500 3-3.500-3v-2z" fill="#fff" stroke="none"/><circle cx="16.500" cy="14" r="1.500" fill="#2bb7f3" stroke="none"/><path d="M31 13.500h11.500M35 8h1.500l3 5.500-3 5.500H35l1-5.500z" fill="#fff" stroke-width="1.300"/><path d="M31.500 11v5" stroke-width="1.200"/><path d="M62 10h-4v9h10v-4M61 15q1-5 6-5M65 7l3 3-3 3"/><path d="M134 12h8l-4 4z" fill="#fff" stroke="none"/><path d="M160 9h8M162 9v5M166 9v5M159 15h10M164 15v5"/><path d="M162 9h4v6h-4z" fill="#fff"/><path d="M217 16h8M244 10l7 7m0-7-7 7"/></svg></div>
  <div class="d-flex flex-grow-1" style="min-height:0">
    <aside class="side d-flex flex-column align-items-center">
      <svg width="24" height="22" style="margin-top:9px" fill="none" stroke="#d5d5d5" stroke-width="1.500"><path d="M1.500 1.500h21v17h-21z"/><path d="M7 14q0-5 5-5V6l5 4.500-5 4.500v-3q-4 0-5 2z" fill="#d5d5d5" stroke="none"/></svg><span style="font-size:9.600px">分享屏幕</span>
      <div class="off d-flex flex-column align-items-center" style="margin-top:17px"><svg width="24" height="20" fill="none" stroke="currentColor" stroke-width="1.300"><path d="M1.500 1.500h21v17h-21z"/><path d="M11 6a4 4 0 1 0 4 5h-4z" fill="currentColor"/><path d="M13 9V5q4 0 4 4z" fill="currentColor" stroke="none"/></svg><span style="font-size:9.800px;letter-spacing:.4px">PPT</span></div>
      <div class="off d-flex flex-column align-items-center" style="margin-top:16px"><svg width="24" height="21" fill="none" stroke="currentColor" stroke-width="1.300"><path d="M1.500 1.500h21v17h-21z"/><path d="M10 6l5 4-5 4z" fill="currentColor" stroke="none"/></svg><span style="font-size:9.600px">播放视频</span></div>
      <div class="off d-flex flex-column align-items-center" style="margin-top:18px"><svg width="24" height="20" fill="none" stroke="currentColor" stroke-width="1.500"><circle cx="12" cy="9" r="8"/><circle cx="12" cy="9" r="4.500"/><circle cx="12" cy="9" r="2.500" fill="currentColor"/><path d="M7 19l2-2M17 19l-2-2M6 19h12"/></svg><span style="font-size:9.600px">摄像头</span></div>
      <svg width="52" height="178" style="margin-top:86px" fill="none" stroke="#9b9da1" stroke-width="1.300"><rect x="22" y="3" width="7" height="10" rx="3.500" fill="#8d8f94" stroke="none"/><path d="M19.500 8.500q0 7 6 7t6-7M25.500 15v3"/><path d="M17 32h4l5-4v14l-5-4h-4z" fill="#b5b6b9" stroke="none"/><path d="M28 32q2 3 0 6M30.500 30q3.500 5 0 10M33 28.500q4 6.500 0 13" /><path d="M22 66V56l9-2v10M22 58l9-2" /><circle cx="20.500" cy="66" r="1.800" fill="#aaa"/><circle cx="29.500" cy="64" r="1.800" fill="#aaa"/><g stroke-width="1.200" stroke="#77797e"><path d="M20 90v-4h4M20 86l4 4M31 90v-4h-4M31 86l-4 4M20 94v4h4M20 98l4-4M31 94v4h-4M31 98l-4-4"/></g><path d="M0 107h52" stroke="#222429" stroke-width="1"/><circle cx="25.500" cy="145" r="7.500" stroke="#c5c6c8" stroke-width="1.800"/><circle cx="25.500" cy="145" r="1" fill="#ccc"/><path d="M21 134h9v3h-9z" fill="#aaa" stroke="none"/><path d="M31 135q5 2 5 8" /><text x="15" y="170" fill="#b8b9bb" stroke="none" font-size="10.500">下课</text></svg>
      <div style="font-size:10.900px;margin-top:30px">00:02:26</div>
      <div class="text-center" style="font-size:9px;line-height:10px;margin-top:4px;color:#aaa">累计丢包<br>0<br>资源监控:</div>
      <svg width="47" height="27"><path d="M.5.5h46v26H.500z" fill="#25282e" stroke="#777"/><path d="M14 26l3-1 2 0 1-5 2 3 2-2 2 3 3-1 3 2 3-5 2 3 2-2 1-2 2 2 2-3 2 0v8z" fill="#2f7e7d"/><path d="M34 21h1v-7h1V2h1v5h2v18" fill="#52555a"/></svg>
    </aside>
    <div class="flex-grow-1 d-flex flex-column" style="margin-left:1px">
      <div class="ltabs d-flex position-relative"><span class="on" style="width:103px">讨论</span><span class="flex-grow-1">成员(86)</span><svg class="position-absolute" style="right:12px;top:0" width="24" height="12"><path d="M1 0h22q-2 12-11 12T1 0z" fill="#88b8ef"/><path d="M6 3l2 0 3-2v8l-3-2H6z" fill="#fff"/><path d="M13 3v5M15.500 3v5M18 4v3" stroke="#d7e8ff"/></svg></div>
      <div class="d-flex" style="height:384px"><div class="flex-grow-1" style="padding-left:8px">
        <div class="msg" style="height:20.500px;line-height:11px">1</div>
        <div class="d-flex"><div class="av" style="background:#35bd91">L</div><div class="nm">我太北了</div></div><div class="msg">111</div>
        <div class="d-flex"><div class="av" style="background:#ea477d">4</div><div class="nm">三问</div></div><div class="msg">1</div>
        <div class="d-flex"><div class="av" style="background:#ffa50d">数</div><div class="nm">唐伯虎点蚊香</div></div><div class="msg">1</div>
        <div class="d-flex"><div class="av" style="background:#ffa50d">数</div><div class="nm">C***</div></div><div class="msg" style="height:35px">1</div>
        <div class="gift"><div class="ln">“papertiger”送给</div><div class="ln d-flex justify-content-center">“M了个J”<svg width="14" height="20" style="margin-top:-3px"><use href="#rose"/></svg></div></div>
        <div class="gift"><div class="ln">“zjy丶 ”送给</div><div class="ln d-flex justify-content-center">“小码哥-黄老师”<svg width="14" height="20" style="margin-top:-3px"><use href="#rose"/></svg></div></div>
        <div class="gift"><div class="ln">“♥若相惜”送给</div><div class="ln d-flex justify-content-center">“小码哥-黄老师”<svg width="14" height="20" style="margin-top:-3px"><use href="#rose"/></svg></div></div>
      </div><div class="d-flex align-items-end" style="width:8px;background:#f5f5f5"><div style="width:8px;height:28px;background:#dcdcdc;border-radius:3px"></div></div></div>
      <div style="height:26px;background:#fafafa;border-bottom:1px solid #f0f0f0"><svg width="207" height="26" fill="none" stroke="#777" stroke-width="1.300"><circle cx="16.500" cy="14" r="6.500"/><path d="M13 15.500q3.500 4 7 0"/><circle cx="14.500" cy="12" r=".7" fill="#777"/><circle cx="18.500" cy="12" r=".7" fill="#777"/><path d="M35 8l7 9M44 8l-7 9"/><circle cx="36" cy="18" r="1.900"/><circle cx="43.500" cy="18" r="1.900"/><path d="M54.500 8.500h14v11h-14z"/><path d="M56 18l4-4 2 2 5-5v7z" fill="#888" stroke="none"/><path d="M190.500 7.500l1.800 3 3.700-.100-1.900 3.300 1.900 3.300-3.700-.100-1.800 3.200-1.800-3.200-3.700.100 1.900-3.300-1.900-3.300 3.700.100z" stroke-width="1.500"/></svg></div>
      <div class="d-flex justify-content-end align-items-end flex-grow-1" style="padding:0 6px 6px 0"><div class="sendb d-flex"><span style="width:49px;border-right:1px solid #54c9fc;letter-spacing:3px;padding-left:3px">发送</span><svg width="20" height="21"><path d="M7.500 9h5L10 12.500z" fill="#fff"/></svg></div></div>
    </div>
  </div>
</section>
</div>
</body>
</html>
